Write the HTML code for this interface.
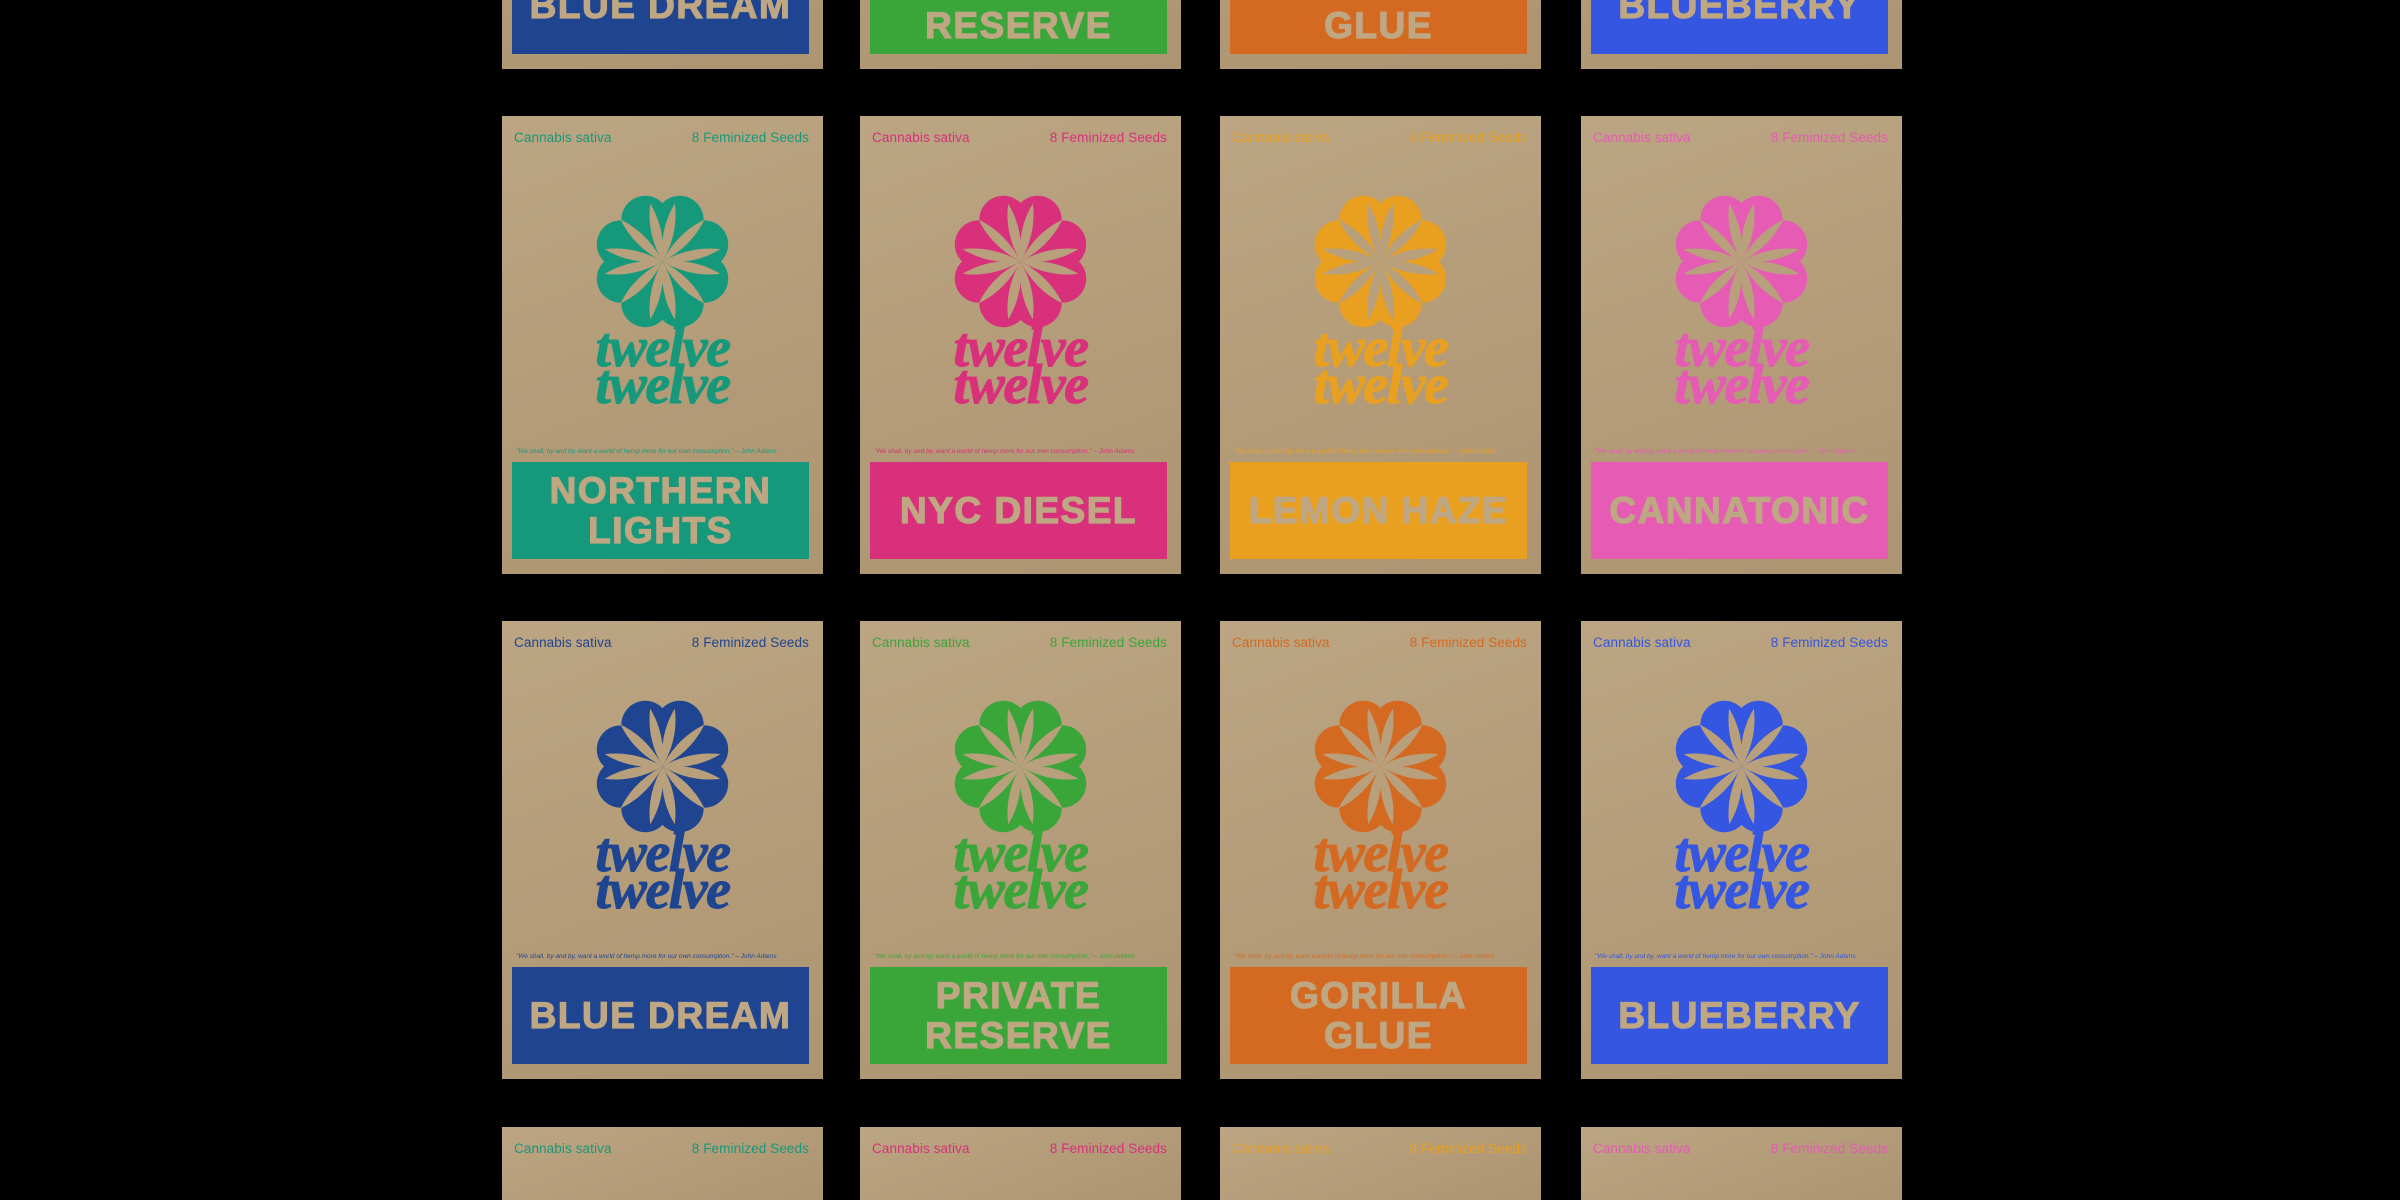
<!DOCTYPE html>
<html><head><meta charset="utf-8"><style>
html,body{margin:0;padding:0;background:#000;width:2400px;height:1200px;overflow:hidden;position:relative;font-family:"Liberation Sans",sans-serif}
.c{position:absolute;width:321px;height:458px;background:linear-gradient(160deg,#bca582,#b39b78 60%,#ad9572);box-shadow:0 0 2px rgba(0,0,0,.6);overflow:hidden}
.t{position:absolute;top:14px;font-size:13.5px;letter-spacing:.1px}
.t.l{left:12px}.t.r{right:14px}
.f{position:absolute;left:90px;top:75px;width:141px;height:141px}
.w{position:absolute;left:0;width:321px;top:214px;text-align:center;font-family:"Liberation Serif",serif;font-style:italic;font-weight:bold;font-size:56px;line-height:37px;letter-spacing:-1.5px;-webkit-text-stroke:1px currentColor}
.q{position:absolute;left:14px;top:332px;font-size:6.5px;font-style:italic;white-space:nowrap}
.b{position:absolute;left:10px;top:346px;width:297px;height:97px;display:flex;align-items:center;justify-content:center;text-align:center;color:#bfa783;font-weight:bold;font-size:37px;line-height:40px;letter-spacing:1.5px;-webkit-text-stroke:1.2px #bfa783}
</style></head><body>
<svg width="0" height="0" style="position:absolute"><defs>
<symbol id="fl" viewBox="-50 -50 100 100">
<g fill="currentColor">
<circle r="34"/>
<circle cx="12.2" cy="-29.6" r="17"/><circle cx="29.6" cy="-12.2" r="17"/><circle cx="29.6" cy="12.2" r="17"/><circle cx="12.2" cy="29.6" r="17"/>
<circle cx="-12.2" cy="29.6" r="17"/><circle cx="-29.6" cy="12.2" r="17"/><circle cx="-29.6" cy="-12.2" r="17"/><circle cx="-12.2" cy="-29.6" r="17"/>
</g>
<g fill="#b8a07c">
<path d="M0,0 Q7,-22 0,-42 Q-7,-22 0,0Z" transform="rotate(12)"/>
<path d="M0,0 Q7,-22 0,-42 Q-7,-22 0,0Z" transform="rotate(-12)"/>
<path d="M0,0 Q7,-22 0,-42 Q-7,-22 0,0Z" transform="rotate(45)"/>
<path d="M0,0 Q7,-22 0,-42 Q-7,-22 0,0Z" transform="rotate(78)"/>
<path d="M0,0 Q7,-22 0,-42 Q-7,-22 0,0Z" transform="rotate(102)"/>
<path d="M0,0 Q7,-22 0,-42 Q-7,-22 0,0Z" transform="rotate(135)"/>
<path d="M0,0 Q7,-22 0,-42 Q-7,-22 0,0Z" transform="rotate(168)"/>
<path d="M0,0 Q7,-22 0,-42 Q-7,-22 0,0Z" transform="rotate(192)"/>
<path d="M0,0 Q7,-22 0,-42 Q-7,-22 0,0Z" transform="rotate(225)"/>
<path d="M0,0 Q7,-22 0,-42 Q-7,-22 0,0Z" transform="rotate(258)"/>
<path d="M0,0 Q7,-22 0,-42 Q-7,-22 0,0Z" transform="rotate(282)"/>
<path d="M0,0 Q7,-22 0,-42 Q-7,-22 0,0Z" transform="rotate(315)"/>
</g>
</symbol></defs></svg>

<!-- Row 0 -->
<div class="c" style="left:502px;top:-389px;color:#1f4590"><div class="b" style="background:#1f4590">BLUE DREAM</div></div>
<div class="c" style="left:860px;top:-389px;color:#3aa63a"><div class="b" style="background:#3aa63a">PRIVATE<br>RESERVE</div></div>
<div class="c" style="left:1220px;top:-389px;color:#d46a22"><div class="b" style="background:#d46a22">GORILLA<br>GLUE</div></div>
<div class="c" style="left:1581px;top:-389px;color:#3456e0"><div class="b" style="background:#3456e0">BLUEBERRY</div></div>

<!-- Row 1 -->
<div class="c" style="left:502px;top:116px;color:#16997a"><div class="t l">Cannabis sativa</div><div class="t r">8 Feminized Seeds</div><svg class="f"><use href="#fl"/></svg><div class="w">twelve<br>twelve</div><div class="q">"We shall, by and by, want a world of hemp more for our own consumption." – John Adams</div><div class="b" style="background:#16997a">NORTHERN<br>LIGHTS</div></div>
<div class="c" style="left:860px;top:116px;color:#d8307a"><div class="t l">Cannabis sativa</div><div class="t r">8 Feminized Seeds</div><svg class="f"><use href="#fl"/></svg><div class="w">twelve<br>twelve</div><div class="q">"We shall, by and by, want a world of hemp more for our own consumption." – John Adams</div><div class="b" style="background:#d8307a">NYC DIESEL</div></div>
<div class="c" style="left:1220px;top:116px;color:#e9a020"><div class="t l">Cannabis sativa</div><div class="t r">8 Feminized Seeds</div><svg class="f"><use href="#fl"/></svg><div class="w">twelve<br>twelve</div><div class="q">"We shall, by and by, want a world of hemp more for our own consumption." – John Adams</div><div class="b" style="background:#e9a020">LEMON HAZE</div></div>
<div class="c" style="left:1581px;top:116px;color:#e65bb4"><div class="t l">Cannabis sativa</div><div class="t r">8 Feminized Seeds</div><svg class="f"><use href="#fl"/></svg><div class="w">twelve<br>twelve</div><div class="q">"We shall, by and by, want a world of hemp more for our own consumption." – John Adams</div><div class="b" style="background:#e65bb4">CANNATONIC</div></div>

<!-- Row 2 -->
<div class="c" style="left:502px;top:621px;color:#1f4590"><div class="t l">Cannabis sativa</div><div class="t r">8 Feminized Seeds</div><svg class="f"><use href="#fl"/></svg><div class="w">twelve<br>twelve</div><div class="q">"We shall, by and by, want a world of hemp more for our own consumption." – John Adams</div><div class="b" style="background:#1f4590">BLUE DREAM</div></div>
<div class="c" style="left:860px;top:621px;color:#3aa63a"><div class="t l">Cannabis sativa</div><div class="t r">8 Feminized Seeds</div><svg class="f"><use href="#fl"/></svg><div class="w">twelve<br>twelve</div><div class="q">"We shall, by and by, want a world of hemp more for our own consumption." – John Adams</div><div class="b" style="background:#3aa63a">PRIVATE<br>RESERVE</div></div>
<div class="c" style="left:1220px;top:621px;color:#d46a22"><div class="t l">Cannabis sativa</div><div class="t r">8 Feminized Seeds</div><svg class="f"><use href="#fl"/></svg><div class="w">twelve<br>twelve</div><div class="q">"We shall, by and by, want a world of hemp more for our own consumption." – John Adams</div><div class="b" style="background:#d46a22">GORILLA<br>GLUE</div></div>
<div class="c" style="left:1581px;top:621px;color:#3456e0"><div class="t l">Cannabis sativa</div><div class="t r">8 Feminized Seeds</div><svg class="f"><use href="#fl"/></svg><div class="w">twelve<br>twelve</div><div class="q">"We shall, by and by, want a world of hemp more for our own consumption." – John Adams</div><div class="b" style="background:#3456e0">BLUEBERRY</div></div>

<!-- Row 3 -->
<div class="c" style="left:502px;top:1127px;height:73px;color:#16997a"><div class="t l">Cannabis sativa</div><div class="t r">8 Feminized Seeds</div></div>
<div class="c" style="left:860px;top:1127px;height:73px;color:#d8307a"><div class="t l">Cannabis sativa</div><div class="t r">8 Feminized Seeds</div></div>
<div class="c" style="left:1220px;top:1127px;height:73px;color:#e9a020"><div class="t l">Cannabis sativa</div><div class="t r">8 Feminized Seeds</div></div>
<div class="c" style="left:1581px;top:1127px;height:73px;color:#e65bb4"><div class="t l">Cannabis sativa</div><div class="t r">8 Feminized Seeds</div></div>
</body></html>
